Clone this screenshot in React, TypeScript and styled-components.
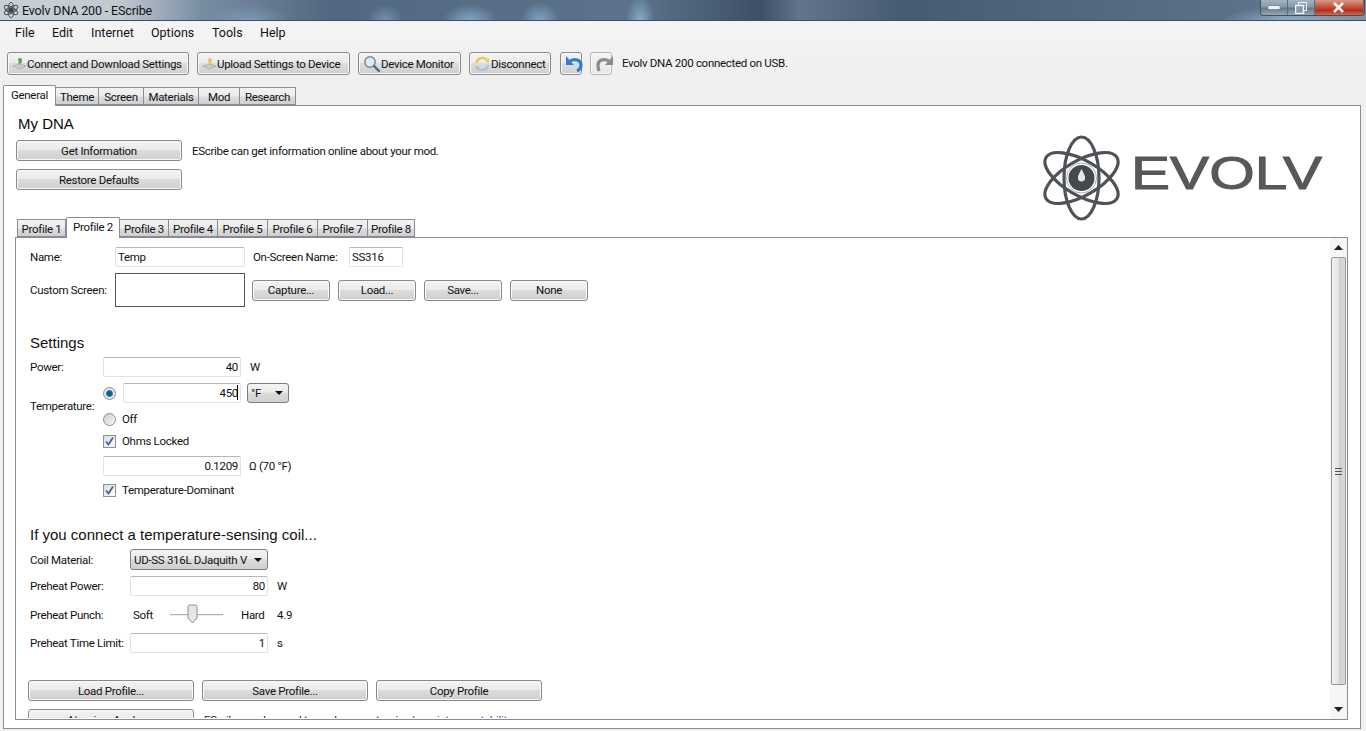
import React from "react";
import styled, { createGlobalStyle, css } from "styled-components";

const Global = createGlobalStyle`
  html, body { margin: 0; padding: 0; width: 1366px; height: 731px; overflow: hidden; background: #fff; }
  body { font-family: Roboto, "Open Sans", sans-serif; font-size: 11.5px; letter-spacing: -0.3px; color: #111; }
  * { box-sizing: border-box; }
`;

const Win = styled.div`
  width: 1366px; height: 731px; display: flex; flex-direction: column; position: relative;
  background: #f0f0f0; overflow: hidden;
`;
const TitleBar = styled.div`
  height: 21px; flex: none; display: flex; align-items: center; padding-left: 3px; gap: 3px;
  border-bottom: 1px solid #3c4f62;
  background:
    radial-gradient(ellipse 14px 24px at 640px 20px, #92b7d8cc, transparent),
    radial-gradient(ellipse 20px 20px at 540px 22px, #8db3d6cc, transparent),
    radial-gradient(ellipse 28px 18px at 470px 22px, #8db3d6dd, transparent),
    radial-gradient(ellipse 18px 18px at 385px 22px, #86aacdaa, transparent),
    radial-gradient(ellipse 40px 18px at 250px 22px, #86aacd99, transparent),
    radial-gradient(ellipse 70px 16px at 1290px 22px, #9fc0d6cc, transparent),
    linear-gradient(90deg, #c8d0d8 0, #c0c8d0 120px, #7a8ea3 200px, #526880 330px, #5c738b 640px, #3d4f66 760px, #63758a 800px, #465a72 900px, #54697f 1100px, #5b7289 1250px, #7d95aa 1366px);
`;
const TitleText = styled.span`font-size: 12.5px; letter-spacing: -0.15px; color: #141414; flex: 1;`;
const Caption = styled.div`
  position: absolute; top: 0; right: 1px; height: 16px; width: 105px; display: flex;
  border: 1px solid #42505e; border-top: 0; border-radius: 0 0 4px 4px; overflow: hidden;
`;
const CapBtn = styled.div<{ $w: number; $close?: boolean }>`
  width: ${p => p.$w}px; display: flex; align-items: center; justify-content: center;
  border-right: 1px solid #5d6e7e;
  background: ${p => p.$close
    ? "linear-gradient(#d59a8c 0, #c6533c 45%, #b5301c 70%, #cf6a4e 100%)"
    : "linear-gradient(#a5b3bf 0, #8799a9 45%, #64798c 55%, #93a8b8 100%)"};
`;
const MenuBar = styled.div`
  height: 24px; flex: none; display: flex; align-items: center; padding: 0 0 2px 15px;
  background: #f3f3f3; font-size: 12.5px; letter-spacing: 0;
`;
const MenuItem = styled.span<{ $w: number }>`width: ${p => p.$w}px; flex: none;`;
const Toolbar = styled.div`
  height: 40px; flex: none; display: flex; align-items: flex-start; padding: 7px 0 0 7px;
  background: linear-gradient(#f2f2f2, #efefef);
`;
const ToolButton = styled.div<{ $w: number; $mr: number; $off?: boolean }>`
  width: ${p => p.$w}px; height: 23px; margin-right: ${p => p.$mr}px; flex: none;
  display: flex; align-items: center; padding-left: 4px;
  border: 1px solid #8a8a8a; border-radius: 3px;
  background: linear-gradient(#f3f3f3 0, #ebebeb 45%, #dcdcdc 50%, #cfcfcf 100%);
  box-shadow: inset 0 0 0 1px #f8f8f8; white-space: nowrap;
  svg { flex: none; }
  ${p => p.$off && css`border-color: #b5b5b5; background: linear-gradient(#f4f4f4, #e8e8e8);`}
`;
const Status = styled.span`margin-left: 2px; line-height: 23px;`;

const TabStrip = styled.div`
  height: 20px; flex: none; display: flex; align-items: flex-end; padding-left: 3px; position: relative; z-index: 1;
`;
const Tab = styled.div<{ $w: number; $active?: boolean }>`
  width: ${p => p.$w}px; height: ${p => p.$active ? 21 : 18}px; flex: none; text-align: center;
  border: 1px solid #898c95; border-left-width: ${p => p.$active ? 1 : 0}px;
  line-height: 18px; white-space: nowrap;
  background: ${p => p.$active ? "#fff" : "linear-gradient(#f2f2f2 0, #ebebeb 50%, #dddddd 55%, #cfcfcf 100%)"};
  ${p => p.$active ? css`border-bottom: 0; margin-bottom: -1px; border-radius: 2px 2px 0 0; position: relative; z-index: 2;` : css`&:first-child{border-left-width:1px;}`}
`;
const Main = styled.div`
  margin: 0 5px 2px 3px; flex: 1; min-height: 0; border: 1px solid #898c95; background: #fff;
  padding: 0 12px 8px 11px; display: flex; flex-direction: column;
`;
const TopArea = styled.div`
  height: 111px; flex: none; display: flex; justify-content: space-between; padding-left: 1px;
`;
const H1 = styled.div`
  font-family: "Liberation Sans", sans-serif; font-size: 15px; letter-spacing: 0; line-height: 20px; color: #0a0a0a; padding: 8px 0 0 2px; height: 34px;
`;
const Btn = styled.div<{ $w?: number; $ml?: number }>`
  width: ${p => p.$w ?? 166}px; height: 21px; flex: none; margin-left: ${p => p.$ml ?? 0}px;
  display: flex; align-items: center; justify-content: center;
  border: 1px solid #8a8a8a; border-radius: 3px;
  background: linear-gradient(#f3f3f3 0, #ebebeb 45%, #dcdcdc 50%, #cfcfcf 100%);
  box-shadow: inset 0 0 0 1px #f8f8f8; white-space: nowrap;
`;
const BtnLine = styled.div`display: flex; align-items: center; gap: 10px; margin-bottom: 8px;`;
const LogoBox = styled.div`margin: 29px 21px 0 0;`;

const ProfileTabs = styled(TabStrip)`padding-left: 2px;`;
const ProfilePanel = styled.div`
  flex: 1; min-height: 0; display: flex; border: 1px solid #898c95; background: #fff; overflow: hidden;
`;
const ScrollWrap = styled.div`flex: 1; min-width: 0; padding-bottom: 1px; display: flex;`;
const Scrollable = styled.div`flex: 1; padding: 9px 0 0 14px; overflow: hidden;`;
const Row = styled.div<{ $h: number; $mb?: number }>`
  height: ${p => p.$h}px; margin-bottom: ${p => p.$mb ?? 0}px; display: flex; align-items: center; white-space: nowrap;
`;
const Lbl = styled.span<{ $w: number; $ml?: number }>`width: ${p => p.$w}px; flex: none; margin-left: ${p => p.$ml ?? 0}px;`;
const Input = styled.div<{ $w: number; $right?: boolean; $ml?: number }>`
  width: ${p => p.$w}px; height: 20px; flex: none; margin-left: ${p => p.$ml ?? 0}px;
  border: 1px solid #dfe3e8; border-top-color: #b4b8bd; border-radius: 2px; background: #fff;
  padding: 0 2px; line-height: 18px; text-align: ${p => p.$right ? "right" : "left"};
`;
const Caret = styled.i`display: inline-block; width: 1px; height: 15px; background: #000; vertical-align: -3px; margin-left: -1px;`;
const After = styled.span<{ $ml: number }>`margin-left: ${p => p.$ml}px;`;
const Screen = styled.div`width: 130px; height: 34px; flex: none; border: 1px solid #555; background: #fff;`;
const H2 = styled.div<{ $mb: number }>`
  font-family: "Liberation Sans", sans-serif; font-size: 15px; letter-spacing: 0; line-height: 20px; color: #111; margin-bottom: ${p => p.$mb}px;
`;
const TempGroup = styled.div`display: flex; align-items: center; margin-bottom: 4px;`;
const TempRows = styled.div`display: flex; flex-direction: column;`;
const Radio = styled.span<{ $on?: boolean }>`
  width: 13px; height: 13px; flex: none; border-radius: 50%; border: 1px solid #8c8c8c;
  background: ${p => p.$on ? "radial-gradient(circle, #0d5f8f 0 2.5px, #4a9bc5 3.2px, #e8e8e8 3.9px)" : "linear-gradient(135deg, #cfcfcf, #f7f7f7)"};
`;
const Check = styled.span`
  width: 13px; height: 13px; flex: none; border: 1px solid #8e8f8f; background: linear-gradient(135deg, #dcdcdc, #fdfdfd);
  display: flex; align-items: center; justify-content: center;
`;
const Select = styled.div<{ $w: number; $ml?: number; $h?: number }>`
  width: ${p => p.$w}px; height: ${p => p.$h ?? 21}px; margin-left: ${p => p.$ml ?? 0}px; flex: none;
  display: flex; align-items: center; justify-content: space-between; padding: 0 5px 0 3px;
  border: 1px solid #7d7d7d; border-radius: 3px; overflow: hidden;
  background: linear-gradient(#f3f3f3 0, #ebebeb 45%, #dcdcdc 50%, #cfcfcf 100%);
`;
const Arrow = styled.i`width: 0; height: 0; border: 4px solid transparent; border-top: 4px solid #111; border-bottom: 0; flex: none; margin-left: 3px;`;
const Track = styled.div`width: 53px; height: 20px; flex: none; margin-right: 18px; position: relative; display: flex; align-items: center;`;
const TrackLine = styled.div`width: 100%; height: 2px; background: #d0d0d0; border-bottom: 1px solid #eee; border-top: 1px solid #b0b0b0;`;
const Thumb = styled.svg`position: absolute; left: 17px; top: -1px;`;
const Clip = styled.div`margin-left: 10px; color: #222;`;
const Link = styled.span`color: #1a4fa0;`;

const ScrollBar = styled.div`
  width: 17px; flex: none; background: #f6f6f6; display: flex; flex-direction: column; align-items: center;
`;
const ScrollArrow = styled.div<{ $end?: boolean }>`
  height: 18px; flex: none; display: flex; align-items: center; justify-content: center; width: 100%;
  ${p => p.$end && css`margin-top: auto; margin-bottom: 1px;`}
`;
const ScrollThumb = styled.div`
  width: 15px; height: 428px; flex: none; margin-top: 1px; border: 1px solid #979797; border-radius: 2px; display: flex;
  align-items: center; justify-content: center;
  background: linear-gradient(90deg, #f1f1f1, #e3e3e3 50%, #cfcfcf 55%, #dadada);
`;
const Grip = styled.div`width: 7px; height: 7px; border-top: 1px solid #555; border-bottom: 1px solid #555; position: relative;
  &::after { content: ""; position: absolute; left: 0; right: 0; top: 2px; height: 1px; background: #555; }
`;

const Tick = () => (
  <svg width="11" height="11" viewBox="0 0 11 11"><path d="M2 5.5 4.5 8.5 9 1.5" fill="none" stroke="#4a5f9e" strokeWidth="1.8" /></svg>
);

const AtomIcon = ({ s = 16 }: { s?: number }) => (
  <svg width={s} height={s} viewBox="0 0 100 100">
    {[90, 30, -30].map(r => (
      <ellipse key={r} cx="50" cy="50" rx="48" ry="19" fill="none" stroke="#4e4e4e" strokeWidth="6" transform={`rotate(${r} 50 50)`} />
    ))}
    <circle cx="50" cy="50" r="16" fill="#444" />
  </svg>
);

const Logo = () => (
  <svg width="284" height="90" viewBox="0 0 284 90">
    {[90, 30, -30].map(r => (
      <ellipse key={r} cx="38.5" cy="43" rx="41" ry="17.5" fill="none" stroke="#4f5358" strokeWidth="3.2" transform={`rotate(${r} 38.5 43)`} />
    ))}
    <circle cx="38.5" cy="43" r="15" fill="#fff" stroke="#a9acb0" strokeWidth="1" />
    <circle cx="38.5" cy="43" r="13" fill="#45484c" />
    <path d="M38.5 34c2 4 3.6 6.400 3.600 8.800a3.600 3.600 0 0 1-7.200 0c0-2.400 1.600-4.800 3.600-8.800Z" fill="#e6e6e6" />
    <text x="88" y="54" fontFamily="'Liberation Sans', sans-serif" fontSize="47" letterSpacing="0" fill="#56585a" stroke="#56585a" strokeWidth="1" textLength="191" lengthAdjust="spacingAndGlyphs">EVOLV</text>
  </svg>
);

const Shape = ({ kind }: { kind: "down" | "up" | "mon" | "disc" | "undo" | "redo" }) => {
  if (kind === "mon") return (
    <svg width="18" height="18" viewBox="0 0 18 18">
      <circle cx="7" cy="7" r="5.2" fill="#dcebf7" stroke="#7c8a96" strokeWidth="1.5" />
      <path d="M11 11l5 5" stroke="#5b6670" strokeWidth="2.4" strokeLinecap="round" />
    </svg>
  );
  if (kind === "disc") return (
    <svg width="17" height="16" viewBox="0 0 17 16">
      <path d="M2.500 7a6 6 0 0 1 10.500-3" fill="none" stroke="#e8c560" strokeWidth="2.400" />
      <path d="M14 9a6 6 0 0 1-10.500 3" fill="none" stroke="#a9c3dc" strokeWidth="2.400" />
      <path d="M11 6h4V2z" fill="#e8c560" /><path d="M5.500 10h-4v4z" fill="#a9c3dc" />
    </svg>
  );
  if (kind === "undo") return (
    <svg width="19" height="19" viewBox="0 0 19 19">
      <path d="M5 7c5-3 11-1 11 4 0 3-1.500 5-4 6" fill="none" stroke="#2f7fd0" strokeWidth="3.200" />
      <path d="M1 2v9h8z" fill="#2f7fd0" />
    </svg>
  );
  if (kind === "redo") return (
    <svg width="19" height="19" viewBox="0 0 19 19">
      <path d="M14 7c-5-3-11-1-11 4 0 3 .5 4 1 6" fill="none" stroke="#8a8a8a" strokeWidth="3.200" />
      <path d="M18 2v9h-8z" fill="#8a8a8a" />
    </svg>
  );
  const a = kind === "down" ? "#4aa84a" : "#e8c560";
  return (
    <svg width="15" height="14" viewBox="0 0 15 14">
      <path d="M1 9l6 3 7-3-6-2z" fill="#c9ccd0" stroke="#9a9ea3" strokeWidth=".6" />
      <path d="M8 1 6 7l4-1z" fill={a} /><circle cx="8" cy="3" r="2" fill={a} />
    </svg>
  );
};

const profileTabs = [["Profile 1", 49], ["Profile 2", 54], ["Profile 3", 49], ["Profile 4", 49], ["Profile 5", 50], ["Profile 6", 50], ["Profile 7", 50], ["Profile 8", 47]] as const;
const mainTabs = [["General", 53], ["Theme", 43], ["Screen", 45], ["Materials", 55], ["Mod", 41], ["Research", 56]] as const;
const menus = [["File", 37], ["Edit", 39], ["Internet", 60], ["Options", 61], ["Tools", 48], ["Help", 40]] as const;

export default function App() {
  return (
    <Win>
      <Global />
      <TitleBar>
        <AtomIcon />
        <TitleText>Evolv DNA 200 - EScribe</TitleText>
        <Caption>
          <CapBtn $w={28}><svg width="12" height="5"><rect width="12" height="4" y="0.500" fill="#eef2f5" stroke="#4b5b69" strokeWidth=".5" /></svg></CapBtn>
          <CapBtn $w={27}><svg width="12" height="12"><rect x="3.500" y=".5" width="8" height="8" fill="none" stroke="#eef2f5" /><rect x=".5" y="3.500" width="8" height="8" fill="#8799a9" stroke="#eef2f5" strokeWidth="1.500" /></svg></CapBtn>
          <CapBtn $w={50} $close><svg width="13" height="11" viewBox="0 0 13 11"><path d="M2 1l9 9M11 1l-9 9" stroke="#f4f4f4" strokeWidth="2.600" /></svg></CapBtn>
        </Caption>
      </TitleBar>
      <MenuBar>
        {menus.map(([m, w]) => <MenuItem key={m} $w={w}>{m}</MenuItem>)}
      </MenuBar>
      <Toolbar>
        <ToolButton $w={182} $mr={8}><Shape kind="down" />Connect and Download Settings</ToolButton>
        <ToolButton $w={153} $mr={8}><Shape kind="up" />Upload Settings to Device</ToolButton>
        <ToolButton $w={103} $mr={8}><Shape kind="mon" />Device Monitor</ToolButton>
        <ToolButton $w={82} $mr={9}><Shape kind="disc" />Disconnect</ToolButton>
        <ToolButton $w={22} $mr={8}><Shape kind="undo" /></ToolButton>
        <ToolButton $w={22} $mr={8} $off><Shape kind="redo" /></ToolButton>
        <Status>Evolv DNA 200 connected on USB.</Status>
      </Toolbar>
      <TabStrip>
        {mainTabs.map(([t, w], i) => <Tab key={t} $w={w} $active={i === 0}>{t}</Tab>)}
      </TabStrip>
      <Main>
        <TopArea>
          <div>
            <H1>My DNA</H1>
            <BtnLine><Btn>Get Information</Btn><span>EScribe can get information online about your mod.</span></BtnLine>
            <BtnLine><Btn>Restore Defaults</Btn></BtnLine>
          </div>
          <LogoBox><Logo /></LogoBox>
        </TopArea>
        <ProfileTabs>
          {profileTabs.map(([t, w], i) => <Tab key={t} $w={w} $active={i === 1}>{t}</Tab>)}
        </ProfileTabs>
        <ProfilePanel>
          <ScrollWrap>
            <Scrollable>
              <Row $h={20} $mb={6}>
                <Lbl $w={85}>Name:</Lbl><Input $w={130}>Temp</Input>
                <Lbl $w={96} $ml={8}>On-Screen Name:</Lbl><Input $w={54}>SS316</Input>
              </Row>
              <Row $h={34} $mb={26}>
                <Lbl $w={85}>Custom Screen:</Lbl><Screen />
                <Btn $w={78} $ml={7}>Capture...</Btn>
                <Btn $w={78} $ml={8}>Load...</Btn>
                <Btn $w={78} $ml={8}>Save...</Btn>
                <Btn $w={78} $ml={8}>None</Btn>
              </Row>
              <H2 $mb={4}>Settings</H2>
              <Row $h={20} $mb={6}>
                <Lbl $w={73}>Power:</Lbl><Input $w={138} $right>40</Input><After $ml={9}>W</After>
              </Row>
              <TempGroup>
                <Lbl $w={73}>Temperature:</Lbl>
                <TempRows>
                  <Row $h={20} $mb={7}>
                    <Radio $on /><Input $w={118} $right $ml={7}>450<Caret /></Input>
                    <Select $w={42} $ml={6} $h={20}>°F<Arrow /></Select>
                  </Row>
                  <Row $h={18}>
                    <Radio /><After $ml={6}>Off</After>
                  </Row>
                </TempRows>
              </TempGroup>
              <Row $h={18} $mb={6}>
                <Lbl $w={73} /><Check><Tick /></Check><After $ml={6}>Ohms Locked</After>
              </Row>
              <Row $h={20} $mb={5}>
                <Lbl $w={73} /><Input $w={138} $right>0.1209</Input><After $ml={8}>Ω (70 °F)</After>
              </Row>
              <Row $h={18} $mb={26}>
                <Lbl $w={73} /><Check><Tick /></Check><After $ml={6}>Temperature-Dominant</After>
              </Row>
              <H2 $mb={4}>If you connect a temperature-sensing coil...</H2>
              <Row $h={21} $mb={6}>
                <Lbl $w={100}>Coil Material:</Lbl><Select $w={138}>UD-SS 316L DJaquith V<Arrow /></Select>
              </Row>
              <Row $h={20} $mb={9}>
                <Lbl $w={100}>Preheat Power:</Lbl><Input $w={138} $right>80</Input><After $ml={9}>W</After>
              </Row>
              <Row $h={20} $mb={8}>
                <Lbl $w={103}>Preheat Punch:</Lbl><Lbl $w={37}>Soft</Lbl>
                <Track>
                  <TrackLine />
                  <Thumb width="11" height="20" viewBox="0 0 11 20"><path d="M1 2.500Q1 1 2.500 1h6Q10 1 10 2.500V14l-4.500 5L1 14Z" fill="#e6e6e6" stroke="#8f8f8f" /></Thumb>
                </Track>
                <Lbl $w={36}>Hard</Lbl><span>4.9</span>
              </Row>
              <Row $h={20} $mb={27}>
                <Lbl $w={100}>Preheat Time Limit:</Lbl><Input $w={138} $right>1</Input><After $ml={9}>s</After>
              </Row>
              <Row $h={21} $mb={8}>
                <Btn $ml={-2}>Load Profile...</Btn>
                <Btn $ml={8}>Save Profile...</Btn>
                <Btn $ml={8}>Copy Profile</Btn>
              </Row>
              <Row $h={21}>
                <Btn $ml={-2}>Atomizer Analyzer</Btn>
                <Clip>EScribe can be used to analyze an atomizer's <Link>resistance stability</Link></Clip>
              </Row>
            </Scrollable>
          </ScrollWrap>
          <ScrollBar>
            <ScrollArrow><svg width="9" height="5"><path d="M0 5 4.500 0 9 5z" fill="#222" /></svg></ScrollArrow>
            <ScrollThumb><Grip /></ScrollThumb>
            <ScrollArrow $end><svg width="9" height="5"><path d="M0 0h9L4.500 5z" fill="#222" /></svg></ScrollArrow>
          </ScrollBar>
        </ProfilePanel>
      </Main>
    </Win>
  );
}
